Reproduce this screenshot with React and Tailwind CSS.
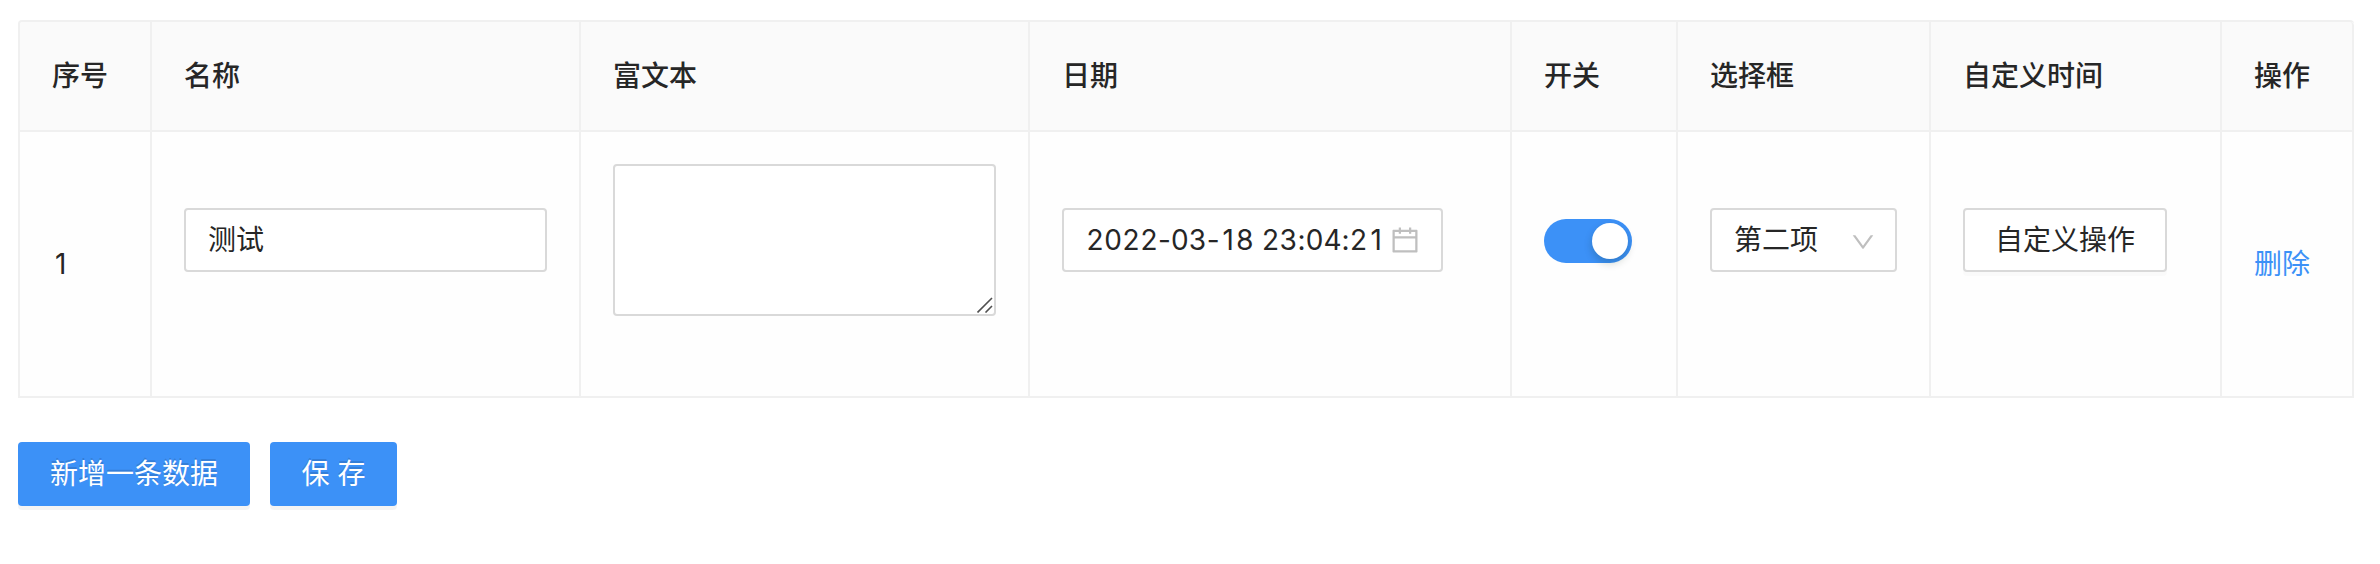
const FORM_CONTROL =
  "flex h-16 items-center rounded-[4px] border-2 border-[#d9d9d9] bg-white";

const COLUMNS = [
  { title: "序号", width: "w-[132px]" },
  { title: "名称", width: "w-[429px]" },
  { title: "富文本", width: "w-[449px]" },
  { title: "日期", width: "w-[482px]" },
  { title: "开关", width: "w-[166px]" },
  { title: "选择框", width: "w-[253px]" },
  { title: "自定义时间", width: "w-[291px]" },
  { title: "操作", width: "w-[132px]" },
];

function CalendarIcon() {
  return (
    <svg viewBox="64 64 896 896" className="size-7 shrink-0 fill-[#bfbfbf]" aria-hidden="true">
      <path d="M880 184H712v-64c0-4.400-3.600-8-8-8h-56c-4.400 0-8 3.600-8 8v64H384v-64c0-4.400-3.600-8-8-8h-56c-4.400 0-8 3.600-8 8v64H144c-17.700 0-32 14.300-32 32v664c0 17.700 14.300 32 32 32h736c17.700 0 32-14.300 32-32V216c0-17.700-14.300-32-32-32zm-40 656H184V460h656v380zM184 392V256h128v48c0 4.400 3.600 8 8 8h56c4.400 0 8-3.600 8-8v-48h256v48c0 4.400 3.600 8 8 8h56c4.400 0 8-3.600 8-8v-48h128v136H184z" />
    </svg>
  );
}

function DownIcon() {
  return (
    <svg viewBox="64 64 896 896" className="mt-1 size-6 shrink-0 fill-[#bfbfbf]" aria-hidden="true">
      <path d="M884 256h-75c-5.100 0-9.900 2.500-12.900 6.600L512 654.200 227.900 262.600c-3-4.100-7.800-6.600-12.900-6.600h-75c-6.500 0-10.300 7.400-6.500 12.700l352.600 486.100c12.800 17.600 39 17.600 51.700 0l352.600-486.100c3.900-5.300.1-12.700-6.400-12.700z" />
    </svg>
  );
}

// Digits share one advance width; punctuation keeps its natural width.
function FixedDigits({ text }) {
  return text.split(/([02-9]+|1)/).filter(Boolean).map((part, index) => {
    if (part === "1") {
      return (
        <span key={index} className="pr-[2px] pl-[3px]">
          1
        </span>
      );
    }
    return (
      <span key={index} className={/\d/.test(part) ? "tabular-nums" : undefined}>
        {part}
      </span>
    );
  });
}

function Cell({ children }) {
  return (
    <td className="h-[266px] border-r-2 border-b-2 border-[#f0f0f0] px-8 py-0 align-middle">
      {children}
    </td>
  );
}

function FormItem({ children }) {
  return <div className="mb-12 flex min-h-16 items-center">{children}</div>;
}

function PrimaryButton({ children, width }) {
  return (
    <button
      type="button"
      className={`${width} h-16 rounded-[4px] bg-[#3c91f7] text-center whitespace-pre text-white shadow-[0_4px_0_rgba(0,0,0,0.045)] [text-shadow:0_-2px_0_rgba(0,0,0,0.12)]`}
    >
      {children}
    </button>
  );
}

export default function App() {
  return (
    <main className="h-[564px] w-[2380px] overflow-hidden bg-white pt-5 pl-[18px] font-['Inter','Noto_Sans_CJK_SC',sans-serif] text-[28px] leading-[44px] text-[#262626]">
      <table className="w-[2336px] table-fixed border-separate border-spacing-0 rounded-t-[4px] border-t-2 border-l-2 border-[#f0f0f0] bg-[#fefefe]">
        <thead>
          <tr>
            {COLUMNS.map((column) => (
              <th
                key={column.title}
                className={`${column.width} h-[110px] border-r-2 border-b-2 border-[#f0f0f0] bg-[#fafafa] px-8 text-left font-medium whitespace-nowrap first:rounded-tl-[2px] last:rounded-tr-[4px]`}
              >
                {column.title}
              </th>
            ))}
          </tr>
        </thead>
        <tbody>
          <tr>
            <Cell>
              <FixedDigits text="1" />
            </Cell>
            <Cell>
              <FormItem>
                <div className={`${FORM_CONTROL} w-full px-[22px]`}>测试</div>
              </FormItem>
            </Cell>
            <Cell>
              <FormItem>
                <div className="relative h-[152px] w-full rounded-[4px] border-2 border-[#d9d9d9] bg-white">
                  <svg
                    viewBox="0 0 16 16"
                    className="absolute right-[1px] bottom-[1px] size-4 fill-none stroke-[#505050] stroke-[1.6]"
                    aria-hidden="true"
                  >
                    <path d="M0.500 15.500L15 1M8.500 15.500L15 9" />
                  </svg>
                </div>
              </FormItem>
            </Cell>
            <Cell>
              <FormItem>
                <div className={`${FORM_CONTROL} w-[381px] justify-between px-[22px]`}>
                  <span className="tracking-[-0.150px] whitespace-nowrap">
                    <FixedDigits text="2022-03-18 23:04:21" />
                  </span>
                  <CalendarIcon />
                </div>
              </FormItem>
            </Cell>
            <Cell>
              <FormItem>
                <div className="mt-[2px] flex h-11 w-[88px] items-center justify-end rounded-full bg-[#3c91f7] pr-1">
                  <span className="size-9 rounded-full bg-white shadow-[0_4px_8px_rgba(0,35,11,0.2)]" />
                </div>
              </FormItem>
            </Cell>
            <Cell>
              <FormItem>
                <div className={`${FORM_CONTROL} w-[187px] justify-between pr-5 pl-[22px]`}>
                  <span className="whitespace-nowrap">第二项</span>
                  <DownIcon />
                </div>
              </FormItem>
            </Cell>
            <Cell>
              <FormItem>
                <button
                  type="button"
                  className={`${FORM_CONTROL} w-[204px] justify-center whitespace-nowrap shadow-[0_4px_0_rgba(0,0,0,0.016)]`}
                >
                  自定义操作
                </button>
              </FormItem>
            </Cell>
            <Cell>
              <a className="whitespace-nowrap text-[#3c91f7]">删除</a>
            </Cell>
          </tr>
        </tbody>
      </table>
      <div className="mt-11 flex gap-5">
        <PrimaryButton width="w-[232px]">新增一条数据</PrimaryButton>
        <PrimaryButton width="w-[127px]">保 存</PrimaryButton>
      </div>
    </main>
  );
}
